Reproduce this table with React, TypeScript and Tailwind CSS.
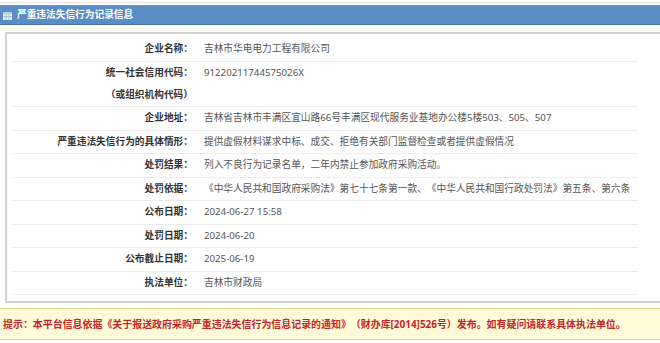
import React from "react";

const FONT = '"Noto Sans", "Noto Sans CJK SC", sans-serif';

type Row = { label: string[]; value: string; h: string };

const rows: Row[] = [
  { label: ["企业名称："], value: "吉林市华电电力工程有限公司", h: "h-[24px]" },
  { label: ["统一社会信用代码：", "（或组织机构代码）"], value: "91220211744575026X", h: "h-[45px]" },
  { label: ["企业地址："], value: "吉林省吉林市丰满区宜山路66号丰满区现代服务业基地办公楼5楼503、505、507", h: "h-[24px]" },
  { label: ["严重违法失信行为的具体情形："], value: "提供虚假材料谋求中标、成交、拒绝有关部门监督检查或者提供虚假情况", h: "h-[23px]" },
  { label: ["处罚结果："], value: "列入不良行为记录名单，二年内禁止参加政府采购活动。", h: "h-[23.5px]" },
  { label: ["处罚依据："], value: "《中华人民共和国政府采购法》第七十七条第一款、《中华人民共和国行政处罚法》第五条、第六条", h: "h-[23.5px]" },
  { label: ["公布日期："], value: "2024-06-27 15:58", h: "h-[23.5px]" },
  { label: ["处罚日期："], value: "2024-06-20", h: "h-[23.5px]" },
  { label: ["公布截止日期："], value: "2025-06-19", h: "h-[23.5px]" },
  { label: ["执法单位："], value: "吉林市财政局", h: "h-[23.5px]" },
];

export default function App() {
  return (
    <div
      className="w-[660px] h-[343px] bg-white overflow-hidden text-[9.7px] [text-spacing-trim:space-all]"
      style={{ fontFamily: FONT }}
    >
      {/* top strip */}
      <div className="h-[5px] bg-white flex flex-col">
        <div className="h-[2px]" />
        <div className="h-[1px] bg-[#e2e4e6]" />
      </div>
      {/* header bar */}
      <div className="h-[20px] bg-[#5a8dc4] border-b border-[#4676ad] border-t border-t-[#6f9dcf] flex items-center pl-[3px]">
        <svg width="9" height="8" viewBox="0 0 9 8" className="mr-[5px] mt-[1px]">
          <rect x="0" y="0" width="9" height="8" fill="#e9eef5" />
          <rect x="0" y="0" width="9" height="2" fill="#c4cfdc" />
          <line x1="0" y1="4.5" x2="9" y2="4.5" stroke="#9fb1c7" strokeWidth="0.8" />
          <line x1="3" y1="2" x2="3" y2="8" stroke="#9fb1c7" strokeWidth="0.8" />
          <line x1="6" y1="2" x2="6" y2="8" stroke="#9fb1c7" strokeWidth="0.8" />
        </svg>
        <span className="text-white font-bold leading-none">严重违法失信行为记录信息</span>
      </div>
      {/* gap */}
      <div className="h-[7px] bg-[#fbfbf8]" />
      {/* panel */}
      <div className="ml-[5px] mr-[-20px] border-t-2 border-l-2 border-b-2 border-[#d2d2d2] pt-[4px] pb-[6px]">
        <div className="ml-[6px] w-[625px] flex flex-col">
          {rows.map((r, i) => (
            <div key={i} className={`flex border-b border-[#ececec] ${r.h}`}>
              <div className="w-[180px] shrink-0 flex flex-col justify-center text-right font-bold text-[#333]">
                {r.label.map((l, j) => (
                  <div key={j} className="leading-[22.5px] whitespace-nowrap">
                    {l}
                  </div>
                ))}
              </div>
              <div className="pl-[11px] text-[#555] whitespace-nowrap leading-[22.5px] flex items-start">
                <div className={r.label.length > 1 ? "" : "h-full flex items-center"}>{r.value}</div>
              </div>
            </div>
          ))}
        </div>
      </div>
      {/* gap */}
      <div className="h-[5px]" />
      {/* notice */}
      <div className="h-[32px] bg-[#fffbd8] border-t border-b border-[#e2d38c] flex items-center pl-[3px]">
        <span className="text-[#c3262a] font-bold whitespace-nowrap text-[9.95px]">
          提示：本平台信息依据《关于报送政府采购严重违法失信行为信息记录的通知》（财办库[2014]526号）发布。如有疑问请联系具体执法单位。
        </span>
      </div>
    </div>
  );
}
